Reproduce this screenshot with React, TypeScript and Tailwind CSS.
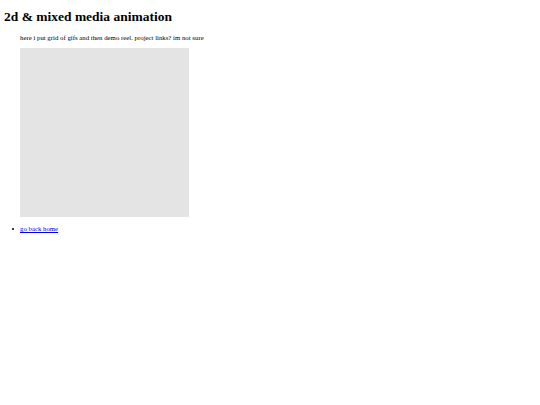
export default function App() {
  return (
    <div className="bg-white min-h-[405px] text-black" style={{ fontFamily: '"Liberation Serif", "Times New Roman", serif' }}>
      <h1 className="pl-[4px] pt-[8px] text-[13.5px] leading-[18px] font-bold">2d &amp; mixed media animation</h1>
      <div className="pl-[20px]">
        <p className="mt-[7px] text-[6.8px] leading-[9px]">here i put grid of gifs and then demo reel. project links? im not sure</p>
        <div className="mt-[6px] w-[169px] h-[169px] bg-[#e4e4e4]" />
      </div>
      <ul className="mt-[7px] pl-[12px] text-[6.8px] leading-[9px]">
        <li className="flex items-center gap-[6px]">
          <span className="w-[2px] h-[2px] rounded-full bg-black" />
          <a href="#" className="text-[#0000ee] underline">go back home</a>
        </li>
      </ul>
    </div>
  );
}
